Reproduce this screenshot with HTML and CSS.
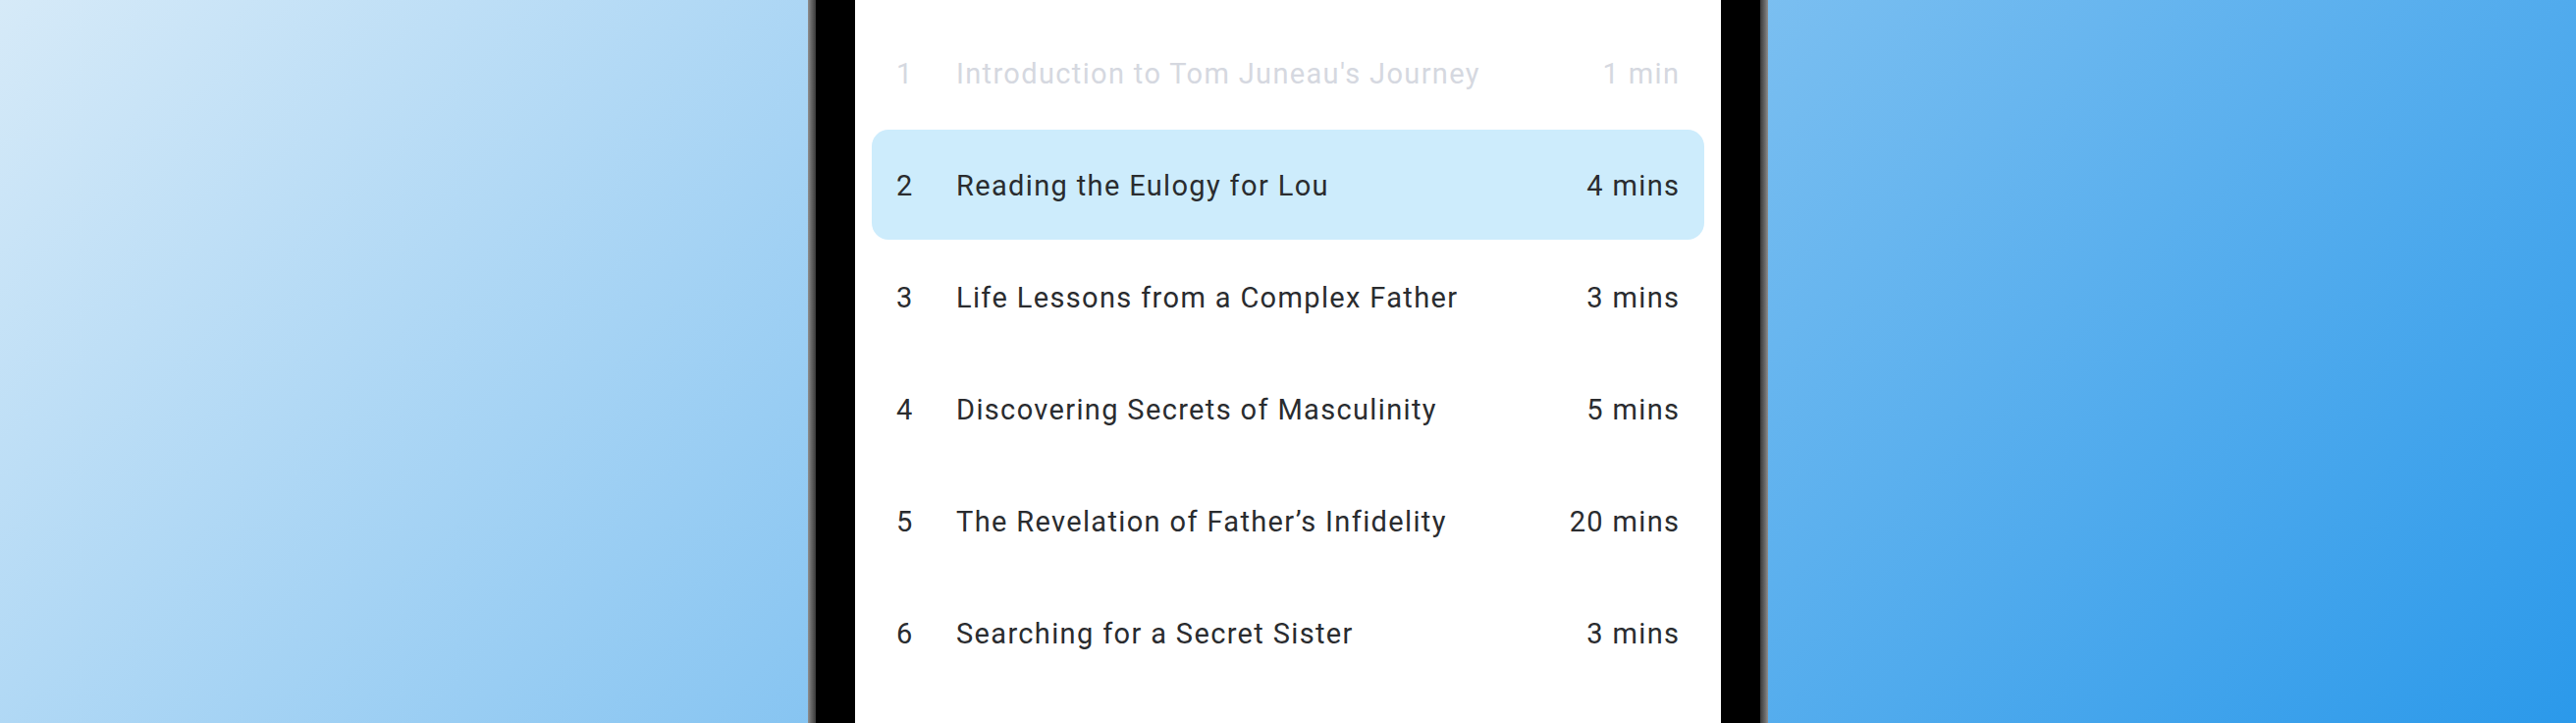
FILE: index.html
```html
<!DOCTYPE html>
<html lang="en">
<head>
  <meta charset="UTF-8">
  <meta name="viewport" content="width=device-width, initial-scale=1.0">
  <title>Chapters</title>
  <link rel="stylesheet" href="styles.css">
</head>
<body>
  <div class="stage">
    <div class="phone">
      <div class="bezel">
        <div class="screen">
          <ul class="chapters">
            <li class="chapter done">
              <span class="num">1</span>
              <span class="title">Introduction to Tom Juneau's Journey</span>
              <span class="time">1 min</span>
            </li>
            <li class="chapter active">
              <span class="num">2</span>
              <span class="title">Reading the Eulogy for Lou</span>
              <span class="time">4 mins</span>
            </li>
            <li class="chapter">
              <span class="num">3</span>
              <span class="title">Life Lessons from a Complex Father</span>
              <span class="time">3 mins</span>
            </li>
            <li class="chapter">
              <span class="num">4</span>
              <span class="title">Discovering Secrets of Masculinity</span>
              <span class="time">5 mins</span>
            </li>
            <li class="chapter">
              <span class="num">5</span>
              <span class="title">The Revelation of Father’s Infidelity</span>
              <span class="time">20 mins</span>
            </li>
            <li class="chapter">
              <span class="num">6</span>
              <span class="title">Searching for a Secret Sister</span>
              <span class="time">3 mins</span>
            </li>
          </ul>
        </div>
      </div>
    </div>
  </div>
</body>
</html>
```

FILE: styles.css
```css
html, body {
  margin: 0;
  height: 100%;
}
body {
  font-family: Roboto, "Noto Sans", Arial, sans-serif;
  overflow: hidden;
}
.stage {
  height: 736px;
  display: flex;
  justify-content: center;
  background: linear-gradient(135deg, #d6eaf8 0%, #2b99ea 100%);
}
.phone {
  width: 978px;
  height: 100%;
  padding: 0 8px;
  box-sizing: border-box;
  background: linear-gradient(90deg, #8f8f8f 0, #6a6a6a 3px, #3a3a3a 8px, #3a3a3a calc(100% - 8px), #6a6a6a calc(100% - 3px), #8f8f8f 100%);
}
.bezel {
  height: 100%;
  background: #000;
  padding: 0 40px;
}
.screen {
  height: 100%;
  background: #fff;
  overflow: hidden;
}
.chapters {
  list-style: none;
  margin: 0;
  padding: 18px 17px 0;
  display: flex;
  flex-direction: column;
  gap: 2px;
}
.chapter {
  height: 112px;
  box-sizing: border-box;
  display: flex;
  align-items: center;
  padding: 2px 26px 0 25px;
  border-radius: 17px;
  font-size: 29px;
  color: #2a2c2f;
  letter-spacing: 1.35px;
}
.chapter .num {
  width: 61px;
  flex: none;
}
.chapter .title {
  flex: 1;
}
.chapter .time {
  flex: none;
  margin-right: -1.35px;
}
.chapter.done {
  color: #d5d8e0;
}
.chapter.active {
  background: #cdecfc;
}
```
